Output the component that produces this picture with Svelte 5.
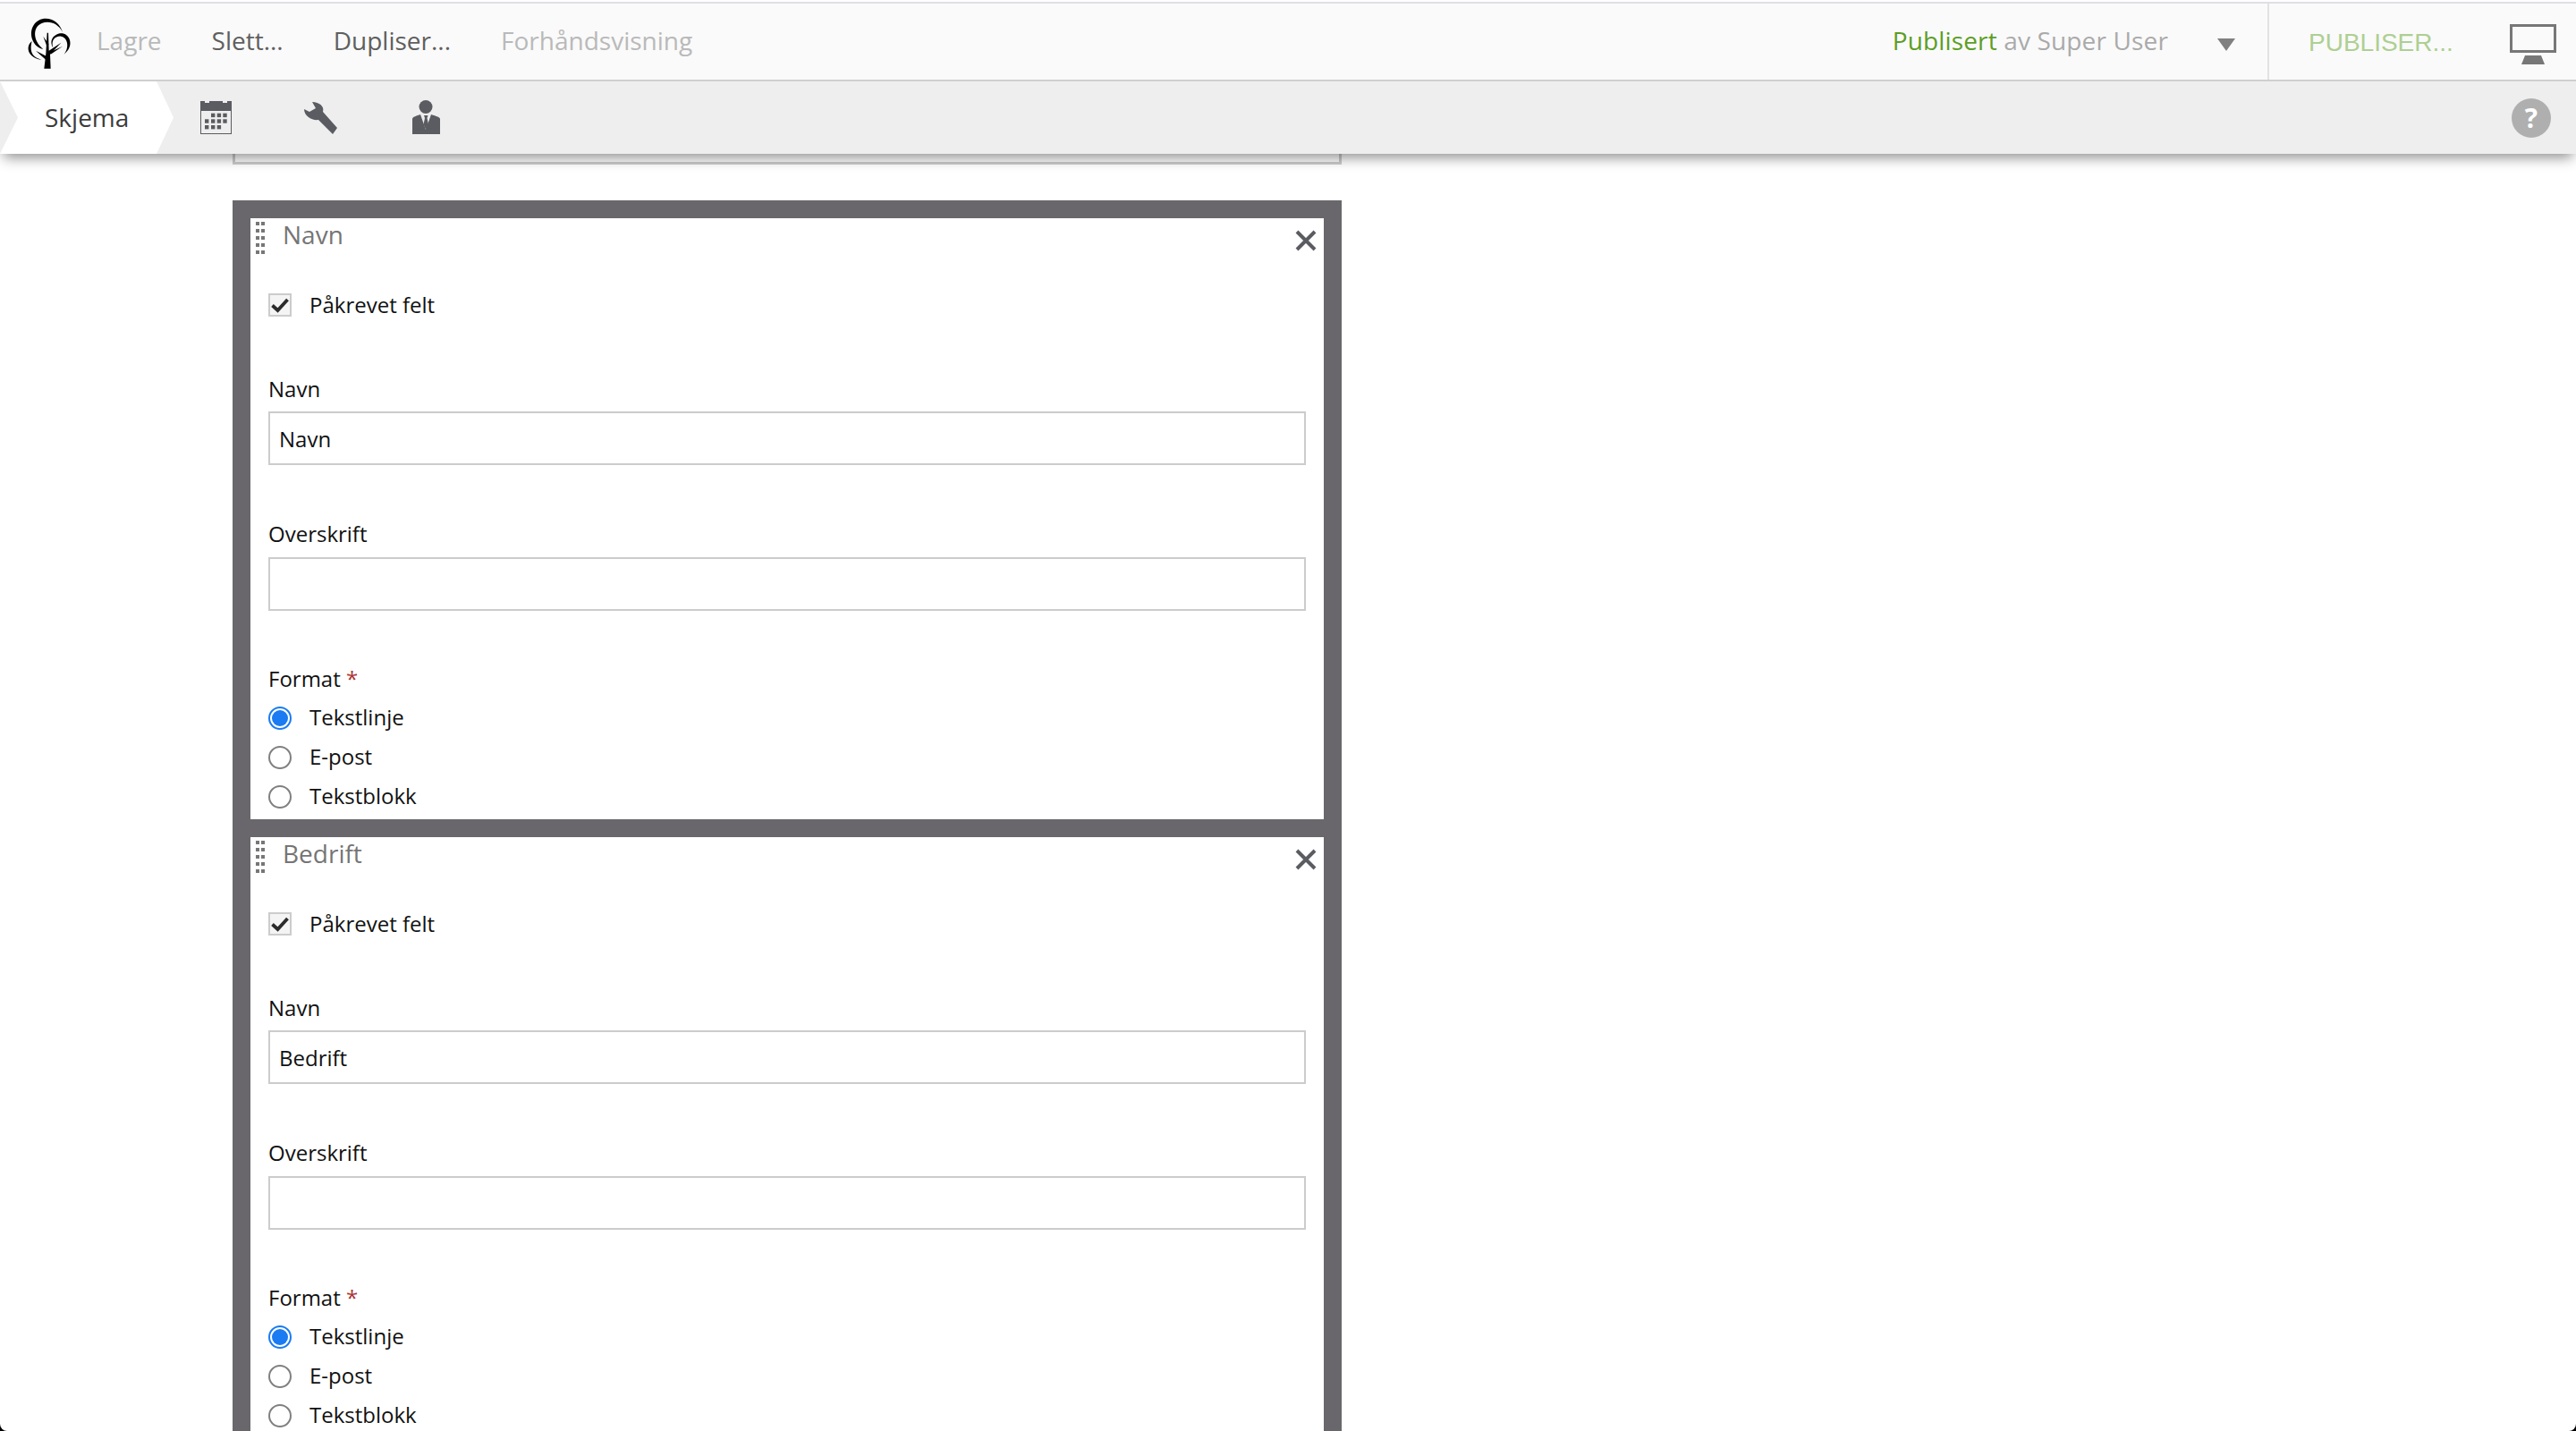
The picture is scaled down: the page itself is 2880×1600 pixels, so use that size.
<script>
	const forms = [
		{ title: "Navn" },
		{ title: "Bedrift" }
	];
	const formats = ["Tekstlinje", "E-post", "Tekstblokk"];
	const calDays = [
		[12, 13.7], [18.7, 13.7], [25.3, 13.7],
		[5, 20.3], [12, 20.3], [18.7, 20.3], [25.3, 20.3],
		[5, 27], [12, 27], [18.7, 27]
	];
</script>

<style>
	:global(body) {
		margin: 0;
		background: #000;
		font-family: "Open Sans", sans-serif;
	}

	.page {
		position: relative;
		height: 1600px;
		overflow: hidden;
		background: #fff;
		border-radius: 0 0 8px 8px;
	}

	.topbars {
		position: absolute;
		top: 0;
		left: 0;
		right: 0;
		z-index: 2;
		padding-top: 2px;
		background: #fff;
		box-shadow: 0 8px 14px -4px rgba(0, 0, 0, 0.45);
	}

	.toolbar {
		display: flex;
		align-items: center;
		height: 85px;
		border-top: 2px solid #dfdfe6;
		border-bottom: 2px solid #cfcfcf;
		background: #fafafa;
		font-size: 28px;
		color: #5f5f5f;
	}

	.logo {
		width: 70px;
		height: 75px;
		margin: 2px 18px 0 20px;
	}

	.tool {
		margin-right: 56px;
		padding-bottom: 3px;
	}

	.tool.off {
		color: #b9b9b9;
	}

	.spacer {
		flex: 1;
	}

	.status {
		color: #aaa;
		margin-right: 55px;
		padding-bottom: 3px;
		letter-spacing: 0.15px;
	}

	.status b {
		font-weight: 400;
		color: #5c9e25;
	}

	.arrow {
		width: 0;
		height: 0;
		border-left: 10px solid transparent;
		border-right: 10px solid transparent;
		border-top: 14px solid #808080;
		margin-top: 6px;
		margin-right: 36px;
	}

	.publish {
		display: flex;
		align-items: center;
		align-self: stretch;
		border-left: 2px solid #e2e2e2;
		padding: 2px 0 0 44px;
		box-sizing: content-box;
		width: 225px;
		color: #aecf92;
		font-family: "Liberation Sans", sans-serif;
	}

	.monitor {
		width: 52px;
		height: 45px;
		margin: 6px 22px 0 0;
	}

	.tabs {
		display: flex;
		align-items: center;
		height: 81px;
		background: #eee;
	}

	.tab {
		display: flex;
		align-items: center;
		box-sizing: border-box;
		width: 194px;
		height: 81px;
		padding: 0 0 2px 50px;
		background: #fff;
		clip-path: polygon(0 0, 175px 0, 194px 50%, 175px 100%, 0 100%, 20px 50%);
		font-size: 28px;
		color: #3c3c3c;
	}

	.cal {
		width: 35px;
		height: 37px;
		margin-left: 30px;
	}

	.wrench {
		width: 37px;
		height: 36px;
		margin-left: 81px;
	}

	.person {
		width: 31px;
		height: 38px;
		margin: 0 0 2px 84px;
	}

	.help {
		display: flex;
		align-items: center;
		justify-content: center;
		width: 44px;
		height: 44px;
		margin-left: auto;
		margin-right: 28px;
		border-radius: 50%;
		background: #afafaf;
		color: #fff;
		font-size: 30px;
		font-weight: 700;
	}

	.content {
		display: flex;
		flex-direction: column;
		width: 1240px;
		margin-left: 260px;
	}

	.prev {
		box-sizing: border-box;
		height: 121px;
		margin-top: 63px;
		border: 3px solid #ccc;
		border-top: 0;
	}

	.group {
		display: flex;
		flex-direction: column;
		gap: 20px;
		margin-top: 40px;
		padding: 20px;
		background: #69676c;
	}

	.field-card {
		position: relative;
		box-sizing: border-box;
		height: 672px;
		padding: 0 20px;
		background: #fff;
		font-size: 24px;
		color: #111;
	}

	.head {
		display: flex;
		align-items: flex-start;
		height: 84px;
		padding: 4px 0 0 6px;
		box-sizing: border-box;
		margin-left: -20px;
	}

	.grip {
		display: grid;
		grid-template-columns: 4px 4px;
		grid-auto-rows: 4px;
		column-gap: 2px;
		row-gap: 4px;
	}

	.grip i {
		background: #777;
	}

	.head h4 {
		margin: -6px 0 0 20px;
		font-size: 28px;
		font-weight: 400;
		line-height: 40px;
		color: #757575;
	}

	.close {
		position: absolute;
		top: 13px;
		right: 8px;
		width: 24px;
		height: 24px;
	}

	.check {
		display: flex;
		align-items: center;
		height: 26px;
		gap: 20px;
	}

	.check span {
		padding-bottom: 2px;
	}

	.box {
		box-sizing: border-box;
		width: 26px;
		height: 26px;
		border: 2px solid #ccc;
		background: #f4f4f4;
	}

	.box svg {
		display: block;
		width: 22px;
		height: 22px;
	}

	.label {
		height: 33px;
		line-height: 33px;
	}

	.first { margin-top: 64px; }
	.next { margin-top: 60px; }
	.last { margin-top: 59px; }

	.req {
		color: #a33;
	}

	.input {
		display: flex;
		align-items: center;
		box-sizing: border-box;
		height: 60px;
		margin-top: 10px;
		padding-left: 10px;
		border: 2px solid #ccc;
	}

	.first + .input {
		margin-top: 9px;
	}

	.radios {
		display: flex;
		flex-direction: column;
		gap: 18px;
		margin-top: 15px;
	}

	.radio {
		display: flex;
		align-items: center;
		height: 26px;
		gap: 20px;
	}

	.radio span {
		padding-bottom: 4px;
	}

	.dot {
		box-sizing: border-box;
		width: 26px;
		height: 26px;
		border: 2px solid #808080;
		border-radius: 50%;
	}

	.dot.on {
		border-color: #1a7bf2;
		padding: 2px;
		background: #1a7bf2;
		background-clip: content-box;
	}
</style>

<div class="page">
	<div class="topbars">
		<div class="toolbar">
			<svg class="logo" viewBox="0 0 210 225">
				<path d="M85 135 C40 125 30 60 70 38 C100 22 140 40 150 78 C135 48 105 38 80 48 C50 60 48 105 85 135 Z"/>
				<path d="M118 130 C100 100 130 78 150 82 C175 86 190 125 155 152 C175 125 165 95 145 92 C125 90 110 105 118 130 Z"/>
				<path d="M47 108 C25 125 30 165 85 172 C60 165 35 155 47 108 Z"/>
				<path d="M88 200 L94 150 L98 80 L102 80 L104 140 L145 113 L108 152 L110 200 Z"/>
				<path d="M95 172 L60 140 L98 160 Z M99 130 L85 92 L103 118 Z M108 145 L150 125 L110 152 Z"/>
			</svg>
			<span class="tool off">Lagre</span>
			<span class="tool">Slett...</span>
			<span class="tool">Dupliser...</span>
			<span class="tool off">Forhåndsvisning</span>
			<div class="spacer"></div>
			<span class="status"><b>Publisert</b> av Super User</span>
			<div class="arrow"></div>
			<div class="publish">PUBLISER...</div>
			<svg class="monitor" viewBox="0 0 52 45">
				<rect x="1.5" y="1.5" width="49" height="29" fill="#fafafa" stroke="#777" stroke-width="3"/>
				<path d="M17 35 H35 L39 45 H13 Z" fill="#777"/>
			</svg>
		</div>
		<div class="tabs">
			<div class="tab">Skjema</div>
			<svg class="cal" viewBox="0 0 35 37">
				<path d="M0 0 H5 V2 H10 V0 H25 V2 H30 V0 H35 V37 H0 Z" fill="#5a5c61"/>
				<rect x="1" y="11" width="33" height="25" fill="#eee"/>
				{#each calDays as d}
					<rect x={d[0]} y={d[1]} width="4.4" height="4.4" fill="#5a5c61"/>
				{/each}
			</svg>
			<svg class="wrench" viewBox="0 0 37 36">
				<path d="M9 0 C17 0 23 5 21 11 L37 29 L32 36 L16 20 C9 21 0 16 0 8 L6 11 L13 7 Z" fill="#5a5c61"/>
			</svg>
			<svg class="person" viewBox="0 0 31 38">
				<circle cx="15" cy="7.5" r="7.5" fill="#5a5c61"/>
				<path d="M0 38 V21 C0 19 3 18 9 16 L15 33 L21 16 C27 18 31 19 31 21 V38 Z" fill="#5a5c61"/>
				<path d="M13 17 H17.5 L16.5 20 L18 27 L15.2 33 L12.5 27 L14 20 Z" fill="#5a5c61"/>
			</svg>
			<div class="help">?</div>
		</div>
	</div>

	<div class="content">
		<div class="prev"></div>
		<div class="group">
			{#each forms as form}
				<div class="field-card">
					<div class="head">
						<div class="grip">
							{#each Array(10) as _}<i></i>{/each}
						</div>
						<h4>{form.title}</h4>
					</div>
					<svg class="close" viewBox="0 0 24 24">
						<path d="M2 2 L22 22 M22 2 L2 22" stroke="#5a5c61" stroke-width="4"/>
					</svg>
					<div class="check">
						<div class="box">
							<svg viewBox="0 0 22 22"><path d="M2.5 11.5 L8.5 17 L19.5 5" fill="none" stroke="#2b2b2b" stroke-width="3.8"/></svg>
						</div>
						<span>Påkrevet felt</span>
					</div>
					<div class="label first">Navn</div>
					<div class="input">{form.title}</div>
					<div class="label next">Overskrift</div>
					<div class="input"></div>
					<div class="label last">Format <span class="req">*</span></div>
					<div class="radios">
						{#each formats as f, i}
							<div class="radio">
								<div class="dot" class:on={i === 0}></div>
								<span>{f}</span>
							</div>
						{/each}
					</div>
				</div>
			{/each}
		</div>
	</div>
</div>
